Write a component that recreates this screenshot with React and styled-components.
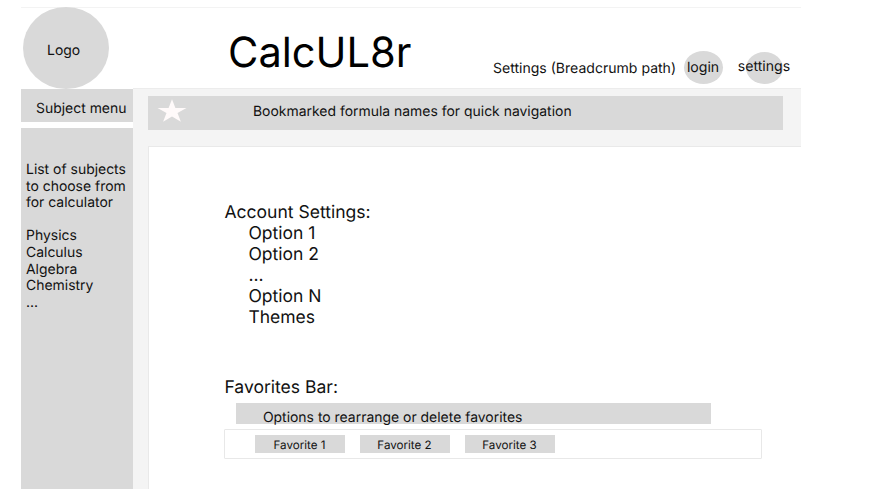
import React from "react";
import styled, { createGlobalStyle } from "styled-components";

const GlobalStyle = createGlobalStyle`
  * { box-sizing: border-box; }
  body { margin: 0; background: #fff; overflow: hidden; }
`;

const Page = styled.div`
  width: 780px;
  height: 482px;
  margin: 7px 0 0 21px;
  display: flex;
  flex-direction: column;
  border-top: 1px solid #f3f3f3;
  background: #fff;
  color: #111;
  font-family: Inter, "Liberation Sans", sans-serif;
  font-size: 13.95px;
  line-height: 16.6px;
  white-space: nowrap;
  text-rendering: geometricPrecision;
`;

const Header = styled.header`
  height: 81px;
  flex: none;
  display: flex;
  align-items: flex-start;
`;

const Logo = styled.div`
  width: 86px;
  height: 82px;
  margin: -1px 0 0 2px;
  padding: 36px 0 0 24px;
  border-radius: 50%;
  background: #d9d9d9;
`;

const Title = styled.h1`
  width: 264px;
  margin: 20px 0 0 119px;
  color: #000;
  font-size: 41.6px;
  line-height: 51px;
  font-weight: 400;
`;

const Breadcrumb = styled.nav`
  width: 191px;
  margin: 53px -1px 0 1px;
  font-size: 14.05px;
`;

const RoundButton = styled.button`
  display: flex;
  justify-content: center;
  align-items: center;
  width: ${(p) => p.$width}px;
  height: ${(p) => p.$height}px;
  margin: ${(p) => p.$margin};
  padding: ${(p) => p.$padding};
  border: 0;
  border-radius: 50%;
  background: #d9d9d9;
  color: inherit;
  font: inherit;
  font-size: 14.1px;
  text-rendering: inherit;
`;

const Body = styled.div`
  flex: 1;
  display: flex;
`;

const Sidebar = styled.aside`
  width: 112px;
  flex: none;
  display: flex;
  flex-direction: column;
  gap: 6px;
`;

const MenuHeading = styled.div`
  height: 33px;
  padding: 12px 0 0 15px;
  background: #d9d9d9;
`;

const SubjectPanel = styled.div`
  flex: 1;
  padding: 34px 0 0 5px;
  background: #d9d9d9;
`;

const Paragraph = styled.p`
  margin: 0 0 16.6px;
`;

const List = styled.ul`
  margin: 0;
  padding: 0;
  list-style: none;
`;

const Main = styled.main`
  flex: 1;
  display: flex;
  flex-direction: column;
  margin-top: -1px;
  padding: 7px 0 0 15px;
  border-top: 1px solid #ececec;
  background: #f4f4f4;
`;

const BookmarkBar = styled.div`
  width: 635px;
  height: 34px;
  flex: none;
  display: flex;
  align-items: flex-start;
  margin-bottom: 16px;
  padding-left: 9px;
  background: #d9d9d9;
`;

const Star = styled.svg`
  width: 30px;
  height: 24px;
  margin: 3px 66px 0 0;
`;

const BookmarkText = styled.span`
  margin-top: 8px;
`;

const Content = styled.section`
  flex: 1;
  padding: 55px 0 0 75.4px;
  border: solid #e9e9e9;
  border-width: 1px 0 0 1px;
  background: #fff;
`;

const Heading = styled.h2`
  margin: 0;
  font-size: 17.55px;
  line-height: 21px;
  font-weight: 400;
`;

const OptionList = styled(List)`
  margin-bottom: 49px;
  padding-left: 24px;
  font-size: 17.5px;
  line-height: 21px;
`;

const OptionsBar = styled.div`
  width: 475px;
  height: 21px;
  margin: 5px 0 5px 12px;
  padding: 7px 0 0 26.5px;
  background: #d9d9d9;
`;

const FavoritesBox = styled.div`
  width: 538px;
  height: 30px;
  display: flex;
  gap: 15px;
  padding: 5px 0 0 29.6px;
  border: 1px solid #e8e8e8;
  border-radius: 1px;
`;

const Favorite = styled.button`
  width: 90px;
  height: 18px;
  padding: 2px 1px 0 0;
  border: 0;
  background: #d9d9d9;
  color: inherit;
  font: inherit;
  text-rendering: inherit;
  font-size: 11.6px;
  line-height: 14px;
`;

const subjects = ["Physics", "Calculus", "Algebra", "Chemistry", "..."];
const options = ["Option 1", "Option 2", "...", "Option N", "Themes"];
const favorites = ["Favorite 1", "Favorite 2", "Favorite 3"];

export default function App() {
  return (
    <>
      <GlobalStyle />
      <Page>
        <Header>
          <Logo>Logo</Logo>
          <Title>CalcUL8r</Title>
          <Breadcrumb>Settings (Breadcrumb path)</Breadcrumb>
          <RoundButton $width={39} $height={33} $margin="43px 0 0 1px" $padding="2px 1px 0 0">
            login
          </RoundButton>
          <RoundButton $width={37} $height={32} $margin="44px 0 0 23px" $padding="0 1px 1px 0">
            settings
          </RoundButton>
        </Header>
        <Body>
          <Sidebar>
            <MenuHeading>Subject menu</MenuHeading>
            <SubjectPanel>
              <Paragraph>
                List of subjects
                <br />
                to choose from
                <br />
                for calculator
              </Paragraph>
              <List>
                {subjects.map((s) => (
                  <li key={s}>{s}</li>
                ))}
              </List>
            </SubjectPanel>
          </Sidebar>
          <Main>
            <BookmarkBar>
              <Star viewBox="0 0 30 24">
                <path
                  d="M15 0.2 18.4 8.9H29.5L20.5 14.1 23.9 22.7 15 17.4 6.1 22.7 9.5 14.1 0.5 8.9H11.6Z"
                  fill="#fffafa"
                />
              </Star>
              <BookmarkText>Bookmarked formula names for quick navigation</BookmarkText>
            </BookmarkBar>
            <Content>
              <Heading>Account Settings:</Heading>
              <OptionList>
                {options.map((o) => (
                  <li key={o}>{o}</li>
                ))}
              </OptionList>
              <Heading>Favorites Bar:</Heading>
              <OptionsBar>Options to rearrange or delete favorites</OptionsBar>
              <FavoritesBox>
                {favorites.map((f) => (
                  <Favorite key={f}>{f}</Favorite>
                ))}
              </FavoritesBox>
            </Content>
          </Main>
        </Body>
      </Page>
    </>
  );
}
